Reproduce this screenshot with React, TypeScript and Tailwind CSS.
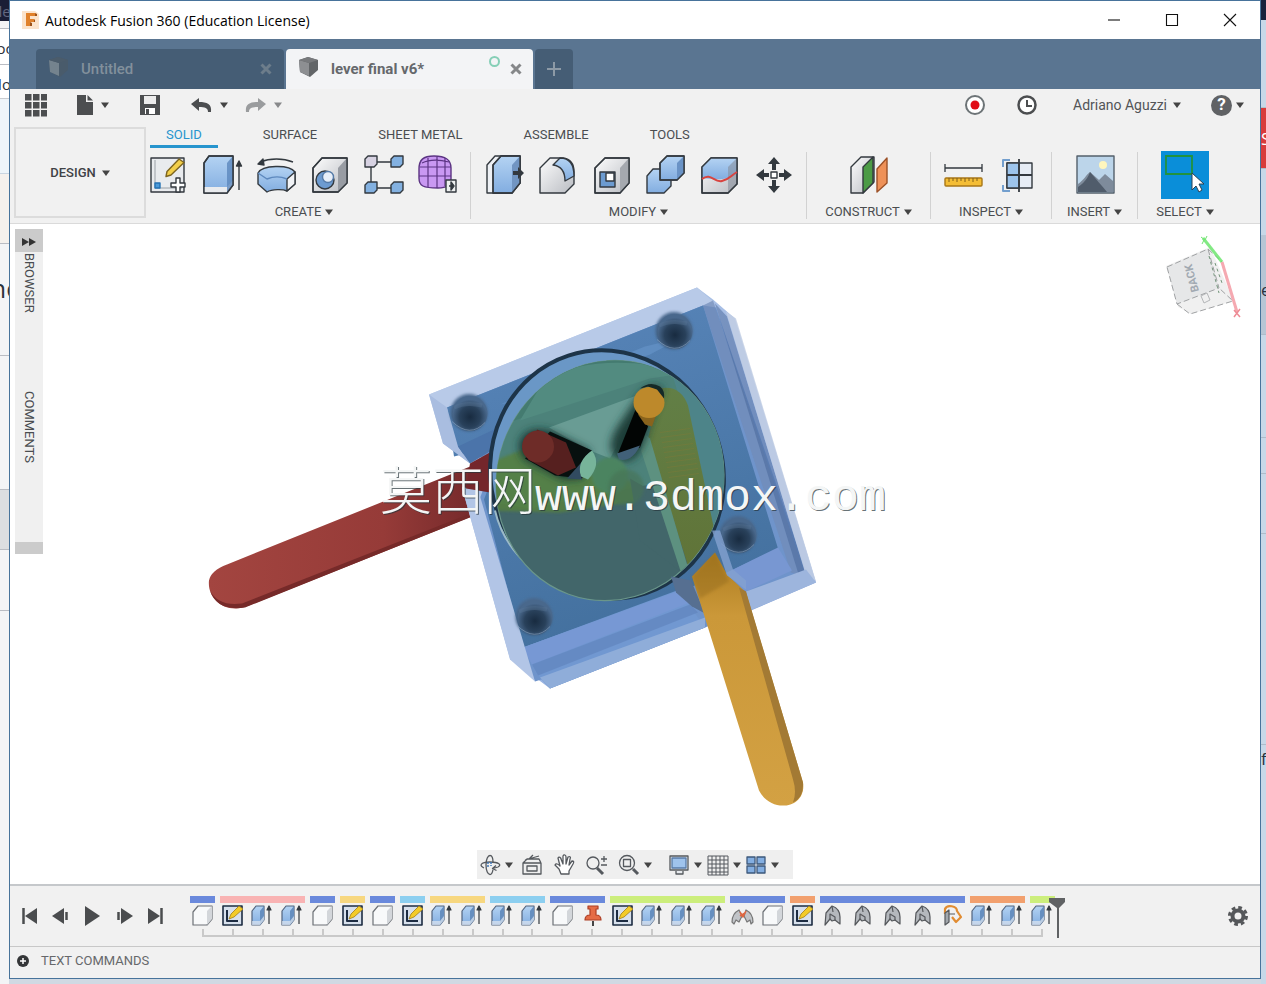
import React from 'react';

const EDGE = '#33393f';

function Caret({ className = 'text-[#444]' }: { className?: string }) {
  return (
    <svg viewBox="0 0 8 6" className={`h-[6px] w-[8px] shrink-0 ${className}`} aria-hidden="true">
      <path d="M0 0.5h8L4 6z" fill="currentColor" />
    </svg>
  );
}

function Defs() {
  return (
    <svg className="absolute h-0 w-0" aria-hidden="true">
      <defs>
        <linearGradient id="blue" x1="0" y1="0" x2="0" y2="1">
          <stop offset="0" stopColor="#b4d3f3" />
          <stop offset="1" stopColor="#82ade0" />
        </linearGradient>
        <linearGradient id="grey" x1="0" y1="0" x2="1" y2="1">
          <stop offset="0" stopColor="#fdfdfd" />
          <stop offset="1" stopColor="#b9bcc2" />
        </linearGradient>
      </defs>
    </svg>
  );
}

function Icon({ children, label }: { children: React.ReactNode; label: string }) {
  return (
    <button type="button" aria-label={label} className="h-10 w-10 shrink-0">
      <svg viewBox="0 0 40 40" className="h-10 w-10 overflow-visible" fill="none" stroke={EDGE} strokeWidth="1.4" strokeLinejoin="round">
        {children}
      </svg>
    </button>
  );
}

const createIcons = (
  <>
    <Icon label="Create Sketch">
      <rect x="2" y="3" width="33" height="34" fill="#e9ebee" />
      <path d="M6 5v28h27" stroke="#9aa0a6" strokeWidth="1" />
      <rect x="6" y="28" width="5" height="5" fill="#4d9ad8" stroke="#2472b4" />
      <path d="M18 16.500 30 4l5 3.500L22 20l-5 1.500z" fill="#f3cf4a" stroke="#7c6420" />
      <path d="M27 23h4v5h5v4h-5v5h-4v-5h-5v-4h5z" fill="#fff" />
    </Icon>
    <Icon label="Extrude">
      <path d="M1 8 6 1h24v29l-6 8H1z" fill="url(#blue)" />
      <path d="M1 32h23l6-7v5l-6 8H1z" fill="#e9ebee" stroke="none" />
      <path d="M24 8l6-7v29l-6 8z" fill="#5b87bd" fillOpacity=".8" stroke="none" />
      <path d="M1 8 6 1h24v29l-6 8H1z" />
      <path d="M36 35V8M33.500 11l2.500-5 2.500 5z" fill={EDGE} />
    </Icon>
    <Icon label="Revolve">
      <path d="M3 7C13 3 26 3 36 7" />
      <path d="M1 9l5-5 1 6z" fill={EDGE} />
      <path d="M1 18C5 10 32 9 38 17v12l-8 7C26 34 15 34 10 37L1 29z" fill="url(#blue)" />
      <path d="M30 24l8-7v12l-8 7z" fill="#f1f3f6" />
      <path d="M1 18l9 6c7-3 13-3 20 0" stroke="#5d88bd" />
    </Icon>
    <Icon label="Hole">
      <path d="M2 13 11 3h25v25L27 37H2z" fill="url(#grey)" />
      <path d="M27 13l9-10v25L27 37z" fill="#989ca3" stroke="none" />
      <path d="M2 13 11 3h25v25L27 37H2z" />
      <circle cx="14" cy="25" r="9" fill="#6d9bd0" />
      <circle cx="17" cy="22" r="5.500" fill="#e6eef8" stroke="#557ba8" />
    </Icon>
    <Icon label="Pattern">
      <path d="M11 7h16M6 12v15M11 33h16" />
      <path d="M0 4l3-3h9v8l-3 3H0z" fill="#d7d2e2" />
      <path d="M26 4l3-3h9v8l-3 3h-9zM0 30l3-3h9v8l-3 3H0zM26 30l3-3h9v8l-3 3h-9z" fill="#83b1e1" />
    </Icon>
    <Icon label="Create Form">
      <path d="M0 14C0 5 4 1 15 1s17 3 17 12v11c0 6-5 9-13 9C4 33 0 31 0 23z" fill="#c998f2" stroke="#5c3483" />
      <path d="M9 3v29M18 2v31M26 3v28M1 12h31M0 21h32M3 8c8-4 19-3 27-1" stroke="#5c3483" strokeWidth="1.200" />
      <rect x="27" y="25" width="10" height="12" fill="#eef0f0" />
      <path d="M30 31h3M32 27l3 4-3 4z" fill={EDGE} />
    </Icon>
  </>
);

const modifyIcons = (
  <>
    <Icon label="Press Pull">
      <path d="M3 10l8-9h25v27L28 38H3z" fill="#eef1f5" />
      <path d="M9 10l8-9h19v27L28 38H9z" fill="url(#blue)" />
      <path d="M28 10l8-9v27l-8 10z" fill="#7195c2" stroke="none" />
      <path d="M9 10l8-9h19v27L28 38H9z" />
      <path d="M29 16h5v-4l6 6-6 6v-4h-5z" fill={EDGE} stroke="none" />
    </Icon>
    <Icon label="Fillet">
      <path d="M2 13 12 3h13c8 1 11 7 11 14v12l-9 9H2z" fill="url(#grey)" />
      <path d="M15 10l7-7c9 0 14 5 14 18l-9 5c0-10-4-15-12-16z" fill="url(#blue)" />
    </Icon>
    <Icon label="Shell">
      <path d="M3 13 13 3h24v25L28 38H3z" fill="url(#grey)" />
      <path d="M28 13l9-10v25L28 38z" fill="#a5a9af" stroke="none" />
      <path d="M3 13 13 3h24v25L28 38H3z" />
      <rect x="8" y="17" width="15" height="15" fill="#6c9bd0" />
      <rect x="14" y="18" width="8" height="8" fill="#fff" />
    </Icon>
    <Icon label="Combine">
      <path d="M1 21l6-7h18v17l-7 7H1z" fill="url(#blue)" />
      <path d="M14 8l7-7h17v17l-7 7H14z" fill="url(#blue)" />
      <path d="M31 8l7-7v17l-7 7z" fill="#6a93c6" stroke="none" />
      <path d="M14 8l7-7h17v17l-7 7H14z" />
    </Icon>
    <Icon label="Split Body">
      <path d="M2 12l9-9h26v26l-9 9H2z" fill="url(#grey)" />
      <path d="M2 12l9-9h26v16c-9 6-20 6-35 4z" fill="url(#blue)" stroke="none" />
      <path d="M28 12l9-9v26l-9 9z" fill="#838b98" fillOpacity=".55" stroke="none" />
      <path d="M2 12l9-9h26v26l-9 9H2z" />
      <path d="M2 24c9-7 12 4 20 2s8-5 15-9" stroke="#d9433f" strokeWidth="2" />
    </Icon>
    <Icon label="Move">
      <g fill={EDGE} stroke="none">
        <path d="M20 2l6 7h-4v6h-4V9h-4zM20 38l6-7h-4v-6h-4v6h-4zM2 20l8-6v4h5v4h-5v4zM38 20l-8-6v4h-5v4h5v4z" />
      </g>
      <rect x="17" y="17" width="6" height="6" fill="#fff" />
    </Icon>
  </>
);

const constructIcon = (
  <Icon label="Offset Plane">
    <path d="M2 12 12 2h13v25L14 38H2z" fill="url(#grey)" />
    <path d="M14 12 24 2v26L14 38z" fill="#4b9b45" />
    <path d="M28 14 38 3v25L28 37z" fill="#ee9158" stroke="#9c5127" />
  </Icon>
);

const inspectIcons = (
  <>
    <Icon label="Measure">
      <path d="M1 13h37M1 9v8M38 9v8" strokeWidth="1.300" />
      <rect x="1" y="23" width="37" height="8" rx="1" fill="#f4bd35" stroke="#a87718" />
      <path d="M5 23v4M9 23v3M13 23v4M17 23v3M21 23v4M25 23v3M29 23v4M33 23v3" stroke="#805e19" strokeWidth="1" />
    </Icon>
    <Icon label="Section Analysis">
      <rect x="9" y="8" width="25" height="25" fill="#e6ecf5" />
      <path d="M9 8h12v25H9z" fill="#9dc4ec" />
      <path d="M21 4v33M9 20h25" strokeWidth="1.800" />
      <path d="M5 12V5h7M5 30v6h7" stroke="#739fce" strokeWidth="2" />
    </Icon>
  </>
);

const insertIcon = (
  <Icon label="Insert Image">
    <rect x="2" y="1" width="37" height="37" fill="#bcd5ea" stroke="#54606b" />
    <circle cx="28" cy="10" r="4" fill="#fff6bd" stroke="none" />
    <path d="M3 29c6-4 8-9 12-12l9 8 6-6 8 7v11H3z" fill="#7e8b9b" stroke="none" />
    <path d="M3 32c8-5 11-12 12-15 6 7 12 14 17 20H3z" fill="#505c6b" stroke="none" />
  </Icon>
);

function Group({ label, icons, className }: { label: string; icons: React.ReactNode; className: string }) {
  return (
    <section className={`flex flex-col items-center ${className}`}>
      <div className="flex h-[54px] items-center gap-[14px]">{icons}</div>
      <button type="button" className="flex h-5 items-center gap-1">
        {label}
        <Caret />
      </button>
    </section>
  );
}

function Divider() {
  return <div className="my-1 w-px shrink-0 bg-[#d2d2d2]" />;
}

function TimelineIcon({ kind }: { kind: string }) {
  return (
    <svg viewBox="0 0 25 25" className="h-[25px] w-[25px]" fill="none" strokeWidth="1.200" strokeLinejoin="round" stroke={EDGE} aria-hidden="true">
      {kind === 'box' && (
        <>
          <path d="M3 9l5-6h14v13l-5 6H3z" fill="#f8f9fa" stroke="#6c7076" />
          <path d="M17 8l5-5v13l-5 6z" fill="#d3d6da" stroke="none" />
        </>
      )}
      {kind === 'sketch' && (
        <>
          <rect x="3" y="3" width="19" height="19" fill="#d7e0ec" stroke="#1d2c42" strokeWidth="1.600" />
          <path d="M7 7v11h11" stroke="#1d2c42" strokeWidth="2" />
          <path d="M9 16l2-5 8-8 4 3-9 8z" fill="#f3cb29" stroke="#a27e16" strokeWidth="0.800" />
        </>
      )}
      {kind === 'extrude' && (
        <>
          <path d="M2 8l4-5h8v14l-4 5H2z" fill="url(#blue)" stroke="#51637d" />
          <path d="M10 8l4-5v14l-4 5z" fill="#668fc0" stroke="none" />
          <path d="M2 18h8l4-5v4l-4 5H2z" fill="#dfe7f1" fillOpacity=".7" stroke="none" />
          <path d="M19 21V6M17 7l2-4 2 4z" fill={EDGE} />
        </>
      )}
      {kind === 'pin' && (
        <>
          <path d="M13 18v5" stroke="#444" strokeWidth="2" />
          <path d="M8 3h10v3h-2v6c3 0 5 2 5 5H5c0-3 2-5 5-5V6H8z" fill="#e56c46" stroke="#ac3e25" />
        </>
      )}
      {kind === 'joint' && (
        <>
          <path d="M2 19c0-6 3-10 7-12l3 6-3 6-3-2-2 4z" fill="#c1c4c8" stroke="#777" />
          <path d="M23 19c0-6-3-10-7-12l-2 6 3 6 3-2 1 4z" fill="#c1c4c8" stroke="#777" />
          <path d="M10 9l3 5 3-6M10 13l5-3" stroke="#df6640" strokeWidth="1.500" />
        </>
      )}
      {kind === 'bend' && (
        <>
          <path d="M6 10l6-7c6 2 8 6 8 11v7l-5-4-3 1-2-2-5 6z" fill="#b4b8bd" stroke="#55585c" />
          <path d="M10 16v-5l5 3v4M12 3l1 6" stroke="#55585c" />
        </>
      )}
      {kind === 'revolve' && (
        <>
          <path d="M5 11V6c2-5 12-3 12 2l4 6-5 5-4-5" stroke="#e18c32" strokeWidth="2.200" />
          <path d="M5 22V10l4-3v12zM9 11h6" fill="#a2a7ac" stroke="#55585c" />
        </>
      )}
    </svg>
  );
}

const timeline = [
  { bar: 'bg-[#6a89dc]', items: ['box'] },
  { bar: 'bg-[#f9b3b3]', items: ['sketch', 'extrude', 'extrude'] },
  { bar: 'bg-[#6a89dc]', items: ['box'] },
  { bar: 'bg-[#f7d77f]', items: ['sketch'] },
  { bar: 'bg-[#6a89dc]', items: ['box'] },
  { bar: 'bg-[#8ccff0]', items: ['sketch'] },
  { bar: 'bg-[#f7d77f]', items: ['extrude', 'extrude'] },
  { bar: 'bg-[#8ccff0]', items: ['extrude', 'extrude'] },
  { bar: 'bg-[#6a89dc]', items: ['box', 'pin'] },
  { bar: 'bg-[#ccee7c]', items: ['sketch', 'extrude', 'extrude', 'extrude'] },
  { bar: 'bg-[#6a89dc]', items: ['joint', 'box'] },
  { bar: 'bg-[#f2a06e]', items: ['sketch'] },
  { bar: 'bg-[#6a89dc]', items: ['bend', 'bend', 'bend', 'bend', 'revolve'] },
  { bar: 'bg-[#f2a06e]', items: ['extrude', 'extrude'] },
  { bar: 'bg-[#ccee7c]', items: ['extrude'] },
];
const tickCount = timeline.reduce((n, g) => n + g.items.length, 0);

const playback = [
  { label: 'Go to start', fill: 'M5 11l12-8v16z', bar: 'M3.500 3v16' },
  { label: 'Step back', fill: 'M1 11l12-8v16z', bar: 'M15.500 7v8' },
  { label: 'Play', fill: 'M3 1l15 10L3 21z', bar: '' },
  { label: 'Step forward', fill: 'M8 3l12 8-12 8z', bar: 'M5.500 7v8' },
  { label: 'Go to end', fill: 'M4 3l12 8-12 8z', bar: 'M17.500 3v16' },
];

function Model() {
  const spheres = [
    [674, 330],
    [469, 412],
    [738, 534],
    [534, 616],
  ];
  return (
    <svg viewBox="10 224 1250 659" className="absolute inset-0 h-full w-full" role="img" aria-label="Lever assembly">
      <defs>
        <linearGradient id="red" x1="0" x2="1">
          <stop offset="0" stopColor="#a34540" />
          <stop offset=".6" stopColor="#963b38" />
          <stop offset="1" stopColor="#6d2528" />
        </linearGradient>
        <linearGradient id="glass" x1="0" y1="0" x2="1" y2="1">
          <stop offset="0" stopColor="#c3d3ed" />
          <stop offset="1" stopColor="#7d9fd9" />
        </linearGradient>
        <linearGradient id="face" x1="0" y1="0" x2=".3" y2="1">
          <stop offset="0" stopColor="#5986bb" />
          <stop offset="1" stopColor="#44719f" />
        </linearGradient>
        <linearGradient id="gold" x1="0" y1="0" x2="0" y2="1">
          <stop offset="0" stopColor="#ac7c1f" />
          <stop offset=".25" stopColor="#cb9839" />
          <stop offset="1" stopColor="#d3a143" />
        </linearGradient>
        <linearGradient id="olive" x1="0" y1="0" x2="0" y2="1">
          <stop offset="0" stopColor="#627f46" />
          <stop offset="1" stopColor="#607337" />
        </linearGradient>
        <radialGradient id="ball" cx=".5" cy=".6">
          <stop offset="0" stopColor="#182b40" />
          <stop offset=".6" stopColor="#29415b" />
          <stop offset="1" stopColor="#49688c" />
        </radialGradient>
        <filter id="soft" x="-30%" y="-30%" width="160%" height="160%">
          <feGaussianBlur stdDeviation="4" />
        </filter>
        <filter id="faint" x="-10%" y="-10%" width="120%" height="120%">
          <feGaussianBlur stdDeviation="1.5" />
        </filter>
        <clipPath id="disk">
          <ellipse cx="610" cy="480" rx="113" ry="121" transform="rotate(20 610 480)" />
        </clipPath>
      </defs>

      <path d="M227 564 500 454 500 505 249 605C225 615 207 598 209 580Q211 570 227 564Z" fill="url(#red)" />
      <path d="M210 590Q218 606 242 603L488 506 484 511 245 607Q217 611 210 590Z" fill="#762a29" />

      <path d="M429 394 697 287 713 299 735 318 816 582 751 610 705 627 550 688 510 658 462 487 478 488 493 458 470 463 443 443Z" fill="url(#glass)" />
      <path d="M429 394 697 287 713 301 447 407Z" fill="#b8cae8" />
      <path d="M447 407 703 305 716 307 807 574 740 604 705 627 535 681 519 650 479 500 495 458 470 456Z" fill="#6f94cb" />
      <path d="M447 407 703 305 778 548 725 573 677 592 523 647 484 499 505 443 454 456Z" fill="url(#face)" />
      <path d="M703 305 713 300 806 577 791 572Z" fill="#718bb5" opacity=".65" />
      <path d="M715 303 727 316 807 577 798 572Z" fill="#405f93" opacity=".45" />
      <path d="M726 311 736 318 816 581 806 575Z" fill="#c3cfe4" opacity=".85" />
      <path d="M523 647 677 590 691 607 705 627 550 688 537 674Z" fill="#7198d1" />
      <path d="M523 647 677 591 690 602 532 664Z" fill="#7798d4" />
      <path d="M532 664 690 604 698 612 538 675Z" fill="#6185bd" opacity=".7" />
      <path d="M540 677 705 617 705 627 550 688Z" fill="#8fadd9" />
      <path d="M727 572 778 547 792 570 746 591Z" fill="#7897d2" />
      <path d="M746 591 806 569 816 582 750 610Z" fill="#9db5dd" />
      <path d="M429 394 447 407 458 446 470 463 443 443Z" fill="#a9bde0" />
      <path d="M458 446 494 429 508 440 470 463Z" fill="#4b74aa" />
      <path d="M500 404 645 346 682 337 650 354 520 400Z" fill="#6b99cf" opacity=".5" />
      <path d="M462 487 478 489 535 681 510 659Z" fill="#b2c5e6" />
      <path d="M470 463 497 448 490 492 466 488Z" fill="#74262b" />

      {spheres.map(([cx, cy]) => (
        <g key={cx}>
          <circle cx={cx} cy={cy} r="18.500" fill="url(#ball)" filter="url(#faint)" />
          <circle cx={cx + 1} cy={cy + 1} r="17.500" fill="url(#ball)" />
          <path d={`M${cx - 17} ${cy + 9}q18 17 33 1`} fill="none" stroke="#8ba4bf" strokeWidth="1" opacity=".6" />
          <path d={`M${cx - 15} ${cy - 5}q12-6 28-2`} fill="none" stroke="#5d7997" strokeWidth="4" opacity=".35" />
        </g>
      ))}

      <ellipse cx="607" cy="474" rx="116" ry="125" transform="rotate(-18 607 474)" fill="#6a97c6" stroke="#1d3448" strokeWidth="4" />
      <path d="M495 510C504 549 540 591 604 593" fill="none" stroke="#9cbac8" strokeWidth="2" />
      <ellipse cx="610" cy="480" rx="113" ry="121" transform="rotate(20 610 480)" fill="#42666a" stroke="#6a968a" strokeWidth="1.200" />
      <g clipPath="url(#disk)">
        <path d="M480 350H740V500L670 480 530 508 480 500Z" fill="#4c827a" />
        <path d="M500 425 660 370 740 355 718 306 550 330Z" fill="#447b70" />
        <path d="M545 378Q600 350 690 372L650 378 520 420Z" fill="#528b80" />
        <path d="M549 427 645 392 610 458 590 450Z" fill="#699c94" />
        <path d="M483 465 525 448 590 474 630 480 640 500 560 512 480 510Z" fill="#57803f" opacity=".85" filter="url(#faint)" />
        <path d="M670 366 726 385 735 550 712 546 680 400Z" fill="#4d8489" />
        <path d="M630 478 668 500 690 578 640 540Z" fill="#42666a" />
        <path d="M648 438 660 388Q680 384 688 405L718 547 692 578Z" fill="url(#olive)" />
        <path d="M645 434 650 438 690 574 683 578 641 450Z" fill="#5d9180" />
      </g>
      <g stroke="#7e7a38" strokeWidth="0.800" opacity=".6">
        {[432, 437, 442, 447, 452, 457, 462, 467, 472, 477].map((y) => (
          <path key={y} d={`M${660 + (y - 432) / 5} ${y}l30-4`} />
        ))}
      </g>

      <path d="M519 447C520 430 535 425 554 432L590 450Q585 467 583 478L563 479 524 459Z" fill="#193532" filter="url(#soft)" />
      <path d="M550 431 592 450 582 478 555 475 525 458Z" fill="#07100f" />
      <path d="M537 429 566 442 576 467 558 475 528 459Z" fill="#56201f" />
      <circle cx="538" cy="446" r="16" fill="#6e2c28" />
      <path d="M592 450Q576 461 582 479L567 478 576 468Z" fill="#314b60" />

      <path d="M635 400Q648 378 663 388L649 427Q639 466 620 460 603 450 617 427Z" fill="#1f3d38" filter="url(#soft)" />
      <path d="M636 408 648 426 640 447 618 453Z" fill="#020504" />
      <path d="M617 453 640 445Q632 462 619 459Z" fill="#416078" />
      <path d="M638 414 661 401 652 426 645 424Z" fill="#88631d" />
      <circle cx="649" cy="402" r="15.500" fill="#bd892b" />
      <path d="M640 388Q650 380 660 386 665 390 664 398L657 389 648 386Z" fill="#152927" />

      <circle cx="610" cy="475" r="18" fill="#4c8460" filter="url(#faint)" />
      <circle cx="626" cy="487" r="18" fill="#477355" opacity=".6" filter="url(#faint)" />
      <path d="M592 450Q602 464 588 479L581 476Q576 461 592 450Z" fill="#77b49a" />

      <path d="M671 576 691 580 705 613 692 606 676 592Z" fill="#566f91" />
      <path d="M692 576 715 552 727 574 746 592 803 782C807 808 771 814 759 790Z" fill="url(#gold)" />
      <path d="M739 587 746 591 803 782Q804 797 793 802 797 792 793 779Z" fill="#a37a34" />
      <path d="M692 576 715 552 729 581 700 598Z" fill="#8f671c" opacity=".4" filter="url(#faint)" />
      <path d="M712 530 727 575 746 589 746 580 733 569 720 530Z" fill="#83a1cf" opacity=".8" />

      <g fontFamily="'Liberation Mono', 'Noto Sans CJK SC', monospace" fontWeight="300">
        <g fill="#26343a" fillOpacity=".7">
          <text x="381" y="510" fontSize="52" fontFamily="'Noto Sans CJK SC', sans-serif">莫西网</text>
          <text x="536" y="510" fontSize="45">www.3dmox.com</text>
        </g>
        <g fill="#f4f6f6" aria-hidden="true">
          <text x="380" y="509" fontSize="52" fontFamily="'Noto Sans CJK SC', sans-serif">莫西网</text>
          <text x="535" y="509" fontSize="45">www.3dmox.com</text>
        </g>
      </g>
    </svg>
  );
}

function ViewCube() {
  return (
    <svg viewBox="1160 230 88 92" className="absolute top-[6px] right-3 h-[92px] w-[88px]" role="img" aria-label="View cube">
      <path d="M1166 266 1210 247 1226 283 1233 301 1191 314 1178 307Z" fill="#f0f0f0" />
      <path d="M1167 267 1208 249 1219 288 1177 304Z" fill="#e6e7e8" />
      <path d="M1167 267 1208 249 1219 288 1177 304ZM1177 304 1190 314 1233 301 1219 288M1208 249 1222 262 1233 301" fill="none" stroke="#a0a2a4" strokeDasharray="6 3" />
      <path d="M1203 238 1222 262" stroke="#65e466" strokeWidth="3" opacity=".8" />
      <path d="M1201 237l4 3 2-4M1204 240l-2 4" stroke="#70e571" fill="none" />
      <path d="M1222 262 1237 312" stroke="#f5a9b1" strokeWidth="3" />
      <path d="M1234 310l6 7M1240 309l-6 8" stroke="#ee8b95" strokeWidth="1.500" />
      <path d="M1209 256l10 37M1215 263l7 20" stroke="#73957a" strokeDasharray="3 3" />
      <path d="M1201 296l6-3 3 7-6 3z" fill="none" stroke="#b4b6b8" />
      <text transform="translate(1199 291) rotate(-105)" fontFamily="Roboto, sans-serif" fontSize="11" fontWeight="700" fill="#a1a9b1">BACK</text>
    </svg>
  );
}

function NavIcon({ label, caret, children, className = '' }: { label: string; caret?: boolean; children: React.ReactNode; className?: string }) {
  return (
    <button type="button" aria-label={label} className={`flex items-center gap-1 ${className}`}>
      <svg viewBox="0 0 22 22" className="h-[22px] w-[22px]" fill="none" stroke="#55595e" strokeWidth="1.300" strokeLinejoin="round">
        {children}
      </svg>
      {caret && <Caret />}
    </button>
  );
}

function NavBar() {
  return (
    <div className="absolute bottom-[5px] left-1/2 flex h-[29px] w-[316px] -translate-x-1/2 items-center bg-[#efefef] pl-[2px]">
      <NavIcon label="Orbit" caret>
        <path d="M14 8c0-4-1-6.500-3-6.500S7 5 7 11s2 9.500 4 9.500c1.500 0 2.500-2 3-5" />
        <path d="M5 14c-5-2-4-6 6-6 9 0 12 3 8 5l-5 1.500M17 11.500 13.500 14.500l4 2" />
        <path d="M9 8v6M12 8v4" stroke="#4279b8" strokeWidth="1.500" strokeDasharray="2 1" />
      </NavIcon>
      <NavIcon label="Look At" className="ml-2">
        <path d="M2 9h18v11H2zM6 12h10v5H6zM2 9l4-4h12l2 4M4 6l14-4M8 5l4-4" />
      </NavIcon>
      <NavIcon label="Pan" className="ml-[11px]">
        <path d="M7 20 5 15 1 11c1-2 3-1 5 1L4 4c1-2 3 0 3 1l2 5V2c1-2 3-1 3 1v7l2-7c2-1 3 0 2 2l-1 6 3-4c2 0 2 1 1 3l-4 7v3z" fill="#fff" />
      </NavIcon>
      <NavIcon label="Zoom" className="ml-[10px]">
        <circle cx="7" cy="9" r="6" />
        <path d="M11 14l6 6" strokeWidth="3" />
        <path d="M15 5h6M18 2v6M15 11h6" />
      </NavIcon>
      <NavIcon label="Fit" caret className="ml-[10px]">
        <circle cx="9" cy="9" r="7.500" />
        <path d="M5.500 5.500h7v7h-7z" />
        <path d="M15 15l5 5" strokeWidth="3" />
      </NavIcon>
      <NavIcon label="Display Settings" caret className="ml-4">
        <path d="M2 2h18v14H2zM8 17v3h7v-3" fill="#e6e9ed" />
        <path d="M4 4h14v10H4z" fill="#9fc3ec" stroke="#577ba8" />
      </NavIcon>
      <NavIcon label="Grid and Snaps" caret className="ml-[5px]">
        <path d="M1 2h20v19H1zM5 2v19M9 2v19M13 2v19M17 2v19M1 6h20M1 10h20M1 14h20M1 18h20" strokeWidth="1" />
      </NavIcon>
      <NavIcon label="Viewports" caret className="ml-[4px]">
        <path d="M2 3h8v7H2zM12 3h8v7h-8zM2 12h8v7H2zM12 12h8v7h-8z" fill="#83aee1" stroke="#3d587b" />
      </NavIcon>
    </div>
  );
}

function CubeGlyph({ dim }: { dim?: boolean }) {
  return (
    <svg viewBox="0 0 22 24" className="mb-1 h-6 w-[22px]" aria-hidden="true">
      <path d="M1 5 10 2l10 3v10l-8 7L2 17z" fill={dim ? '#495b6b' : '#626568'} />
      <path d="M1 5l10 3v13l-9-4z" fill={dim ? '#74838e' : '#8d8f92'} />
      <path d="M1 5l9-3 10 3-9 3z" fill={dim ? '#4b5c6b' : '#77797c'} />
    </svg>
  );
}

function Cross({ className }: { className: string }) {
  return (
    <svg viewBox="0 0 12 12" className={`h-3 w-3 ${className}`} aria-hidden="true">
      <path d="M1.500 1.500l9 9M10.500 1.500l-9 9" stroke="currentColor" strokeWidth="3" />
    </svg>
  );
}

export default function App() {
  return (
    <div className="flex min-h-screen bg-[#d0d9e3] font-[Roboto,'Liberation_Sans',sans-serif] text-[13px] text-[#4a4d50]">
      <Defs />
      <aside className="w-[9px] shrink-0 overflow-hidden bg-[#f3f4f6] font-['Open_Sans',sans-serif] text-[15px] whitespace-nowrap text-[#2b3139]">
        <div className="flex h-[21px] justify-center bg-[#1a1e36] text-[#626780]">le</div>
        <div className="h-[8px] border-b border-[#b9bcc3]" />
        <div className="flex h-[36px] justify-center border-b border-[#b9bcc3] bg-white pt-2">oc</div>
        <div className="flex h-[34px] justify-center border-b border-[#c9ccd1] bg-white pt-2">lo</div>
        <div className="h-[75px] border-b border-[#c9d5e1] bg-[#eef5fa]" />
        <div className="h-[70px] border-b border-[#b9bcc3] bg-[#f5f1ed]" />
        <div className="flex h-[112px] justify-center border-b border-[#b9bcc3] pt-[26px] text-[25px]">nc</div>
        <div className="h-[134px] border-b border-[#b9bcc3]" />
        <div className="h-[60px] border-b border-[#b9bcc3] bg-[#dcdee1]" />
        <div className="h-[61px] border-b border-[#b9bcc3]" />
      </aside>

      <main className="mb-[5px] flex min-w-0 flex-1 flex-col border border-[#47739b] bg-[#f1f1f1]">
        <header className="flex h-[38px] shrink-0 items-center bg-white pr-px pl-3 font-['Open_Sans',sans-serif] text-[14px] text-black">
          <svg viewBox="0 0 17 20" className="h-5 w-[17px]" aria-hidden="true">
            <path d="M0 1h13l4 3v15H0z" fill="#fbe3cb" />
            <path d="M4 3h9v3H8v3h4v3H8v4H4z" fill="#e0812b" />
            <path d="M13 3l2 1v2h-2zM12 9l1 1v2h-1zM8 12l2 1v3H8z" fill="#9c5117" />
          </svg>
          <h1 className="ml-[6px] flex-1">Autodesk Fusion 360 (Education License)</h1>
          {[
            { label: 'Minimize', d: 'M1 7h12' },
            { label: 'Maximize', d: 'M1.500 1.500h11v11h-11z' },
            { label: 'Close', d: 'M1 1l12 12M13 1L1 13' },
          ].map((b) => (
            <button key={b.label} type="button" aria-label={b.label} className="flex h-full w-[58px] items-center justify-center">
              <svg viewBox="0 0 14 14" className="h-[14px] w-[14px]" fill="none" stroke="#111" strokeWidth="1.100">
                <path d={b.d} />
              </svg>
            </button>
          ))}
        </header>

        <nav className="flex h-[50px] shrink-0 items-end bg-[#5a7591] pl-[26px] text-[15px] font-medium">
          <div className="flex h-10 w-[248px] items-center rounded-t bg-[#455d75] px-3 text-[#82909c]">
            <CubeGlyph dim />
            <a href="#untitled" className="ml-[11px] flex-1">Untitled</a>
            <button type="button" aria-label="Close Untitled"><Cross className="text-[#6d7d8b]" /></button>
          </div>
          <div className="ml-[2px] flex h-10 w-[247px] items-center rounded-t bg-[#f3f4f6] pr-[11px] pl-3 text-[#65686c]">
            <CubeGlyph />
            <a href="#lever" className="ml-[11px] flex-1 font-bold">lever final v6*</a>
            <span className="mr-[10px] mb-4 h-[11px] w-[11px] rounded-full border-2 border-[#86cfb7]" />
            <button type="button" aria-label="Close lever final v6"><Cross className="text-[#858789]" /></button>
          </div>
          <button type="button" aria-label="New tab" className="ml-[2px] flex h-10 w-[38px] items-center justify-center rounded-t bg-[#455d75]">
            <svg viewBox="0 0 14 14" className="h-[14px] w-[14px]"><path d="M7 0v14M0 7h14" stroke="#8d9aa6" strokeWidth="2" /></svg>
          </button>
        </nav>

        <div className="flex h-8 shrink-0 items-center pr-4 pl-[14px] text-[#4c4e50]">
          <button type="button" aria-label="Data panel" className="w-[23px]">
            <svg viewBox="0 0 23 23" className="h-[23px] w-[23px]" fill="currentColor">
              {[0, 8, 16].map((y) => [0, 8, 16].map((x) => <rect key={`${x}-${y}`} x={x + 1} y={y} width="6.500" height="6.500" />))}
            </svg>
          </button>
          <button type="button" aria-label="File" className="ml-[29px] flex items-center gap-[5px]">
            <svg viewBox="0 0 20 22" className="h-[22px] w-5"><path d="M1 1h9v7h7v13H1z" fill="currentColor" /><path d="M11.500 1l5.500 5.500h-5.500z" fill="currentColor" /></svg>
            <Caret />
          </button>
          <button type="button" aria-label="Save" className="ml-[31px]">
            <svg viewBox="0 0 20 22" className="h-[22px] w-5">
              <path d="M0 1h20v20H0z" fill="currentColor" />
              <path d="M4 2h12v8H4z" fill="#ececec" />
              <path d="M5 14h10v6H5z" fill="#fff" />
              <path d="M6 15h3v5H6z" fill="currentColor" />
            </svg>
          </button>
          <button type="button" aria-label="Undo" className="ml-[31px] flex items-center gap-[7px]">
            <svg viewBox="0 0 22 18" className="h-[18px] w-[22px]"><path d="M0 8l8-6v4c8 0 13 2 12 10h-3c0-4-3-5-9-5v4z" fill="currentColor" /></svg>
            <Caret />
          </button>
          <button type="button" aria-label="Redo" className="ml-[17px] flex items-center gap-[7px] text-[#9a9c9e]">
            <svg viewBox="0 0 22 18" className="h-[18px] w-[22px]"><path d="M21 8l-8-6v4C5 6 0 8 1 16h3c0-4 3-5 9-5v4z" fill="currentColor" /></svg>
            <Caret className="text-[#88898b]" />
          </button>
          <div className="flex-1" />
          <button type="button" aria-label="Record" className="mr-[31px]">
            <svg viewBox="0 0 22 22" className="h-[22px] w-[22px]"><circle cx="11" cy="11" r="9" fill="#fff" stroke="#6d7477" strokeWidth="2" /><circle cx="11" cy="11" r="4.500" fill="#e10c16" /></svg>
          </button>
          <button type="button" aria-label="Job status" className="mr-9">
            <svg viewBox="0 0 20 22" className="h-[22px] w-5" fill="none" stroke="currentColor"><circle cx="10" cy="11" r="8.500" fill="#fff" strokeWidth="2.500" /><path d="M10 6v6h5" strokeWidth="2" /></svg>
          </button>
          <button type="button" className="mr-[30px] flex items-center gap-[6px] text-[14px] text-[#525457]">Adriano Aguzzi <Caret /></button>
          <button type="button" aria-label="Help" className="flex items-center gap-1">
            <span className="flex h-[21px] w-[21px] items-center justify-center rounded-full bg-[#606265] text-[17px] font-bold text-white">?</span>
            <Caret />
          </button>
        </div>

        <div className="flex h-[103px] shrink-0 border-b border-[#dadada] pl-1">
          <button type="button" className="mt-[6px] mb-[5px] flex w-[132px] shrink-0 items-center justify-center gap-[6px] border-2 border-[#dcdcdc] font-medium text-[#404246]">
            DESIGN <Caret />
          </button>
          <div className="ml-1 flex min-w-0 flex-1 flex-col">
            <div className="flex h-[27px] gap-[29px]">
              {['SOLID', 'SURFACE', 'SHEET METAL', 'ASSEMBLE', 'TOOLS'].map((t, i) => (
                <button
                  key={t}
                  type="button"
                  className={i === 0 ? 'border-b-[3px] border-[#2795ce] px-4 pt-1 text-[#2795ce]' : 'border-b-[3px] border-transparent px-4 pt-1'}
                >
                  {t}
                </button>
              ))}
            </div>
            <div className="flex flex-1">
              <Group label="CREATE" icons={createIcons} className="w-[320px] pr-3" />
              <Divider />
              <Group label="MODIFY" icons={modifyIcons} className="w-[335px]" />
              <Divider />
              <Group label="CONSTRUCT" icons={constructIcon} className="w-[123px]" />
              <Divider />
              <Group label="INSPECT" icons={inspectIcons} className="w-[120px]" />
              <Divider />
              <Group label="INSERT" icons={insertIcon} className="w-[85px]" />
              <Divider />
              <Group
                label="SELECT"
                className="w-[94px]"
                icons={
                  <button type="button" aria-label="Select" className="h-12 w-12 bg-[#0a8ed9]">
                    <svg viewBox="0 0 48 48" className="h-12 w-12">
                      <path d="M5 5h26v18H5z" fill="none" stroke="#22923d" strokeWidth="1.800" />
                      <path d="M31 22v17l4-4 3 6 3-2-3-6h5z" fill="#fff" stroke="#2b4052" />
                    </svg>
                  </button>
                }
              />
            </div>
          </div>
        </div>

        <section className="relative min-h-[600px] flex-1 overflow-hidden bg-white">
          <Model />
          <div className="absolute top-[5px] left-[5px] flex h-[325px] w-7 flex-col items-center bg-[#f0f0f0]">
            <button type="button" aria-label="Expand panels" className="flex h-[23px] w-full items-center justify-center bg-[#cbcbcb] pt-[3px]">
              <svg viewBox="0 0 14 10" className="h-[10px] w-[14px]"><path d="M0 1l7 4-7 4zM7 1l7 4-7 4z" fill="#333" /></svg>
            </button>
            <button type="button" className="mt-px h-[60px] [writing-mode:vertical-rl]">BROWSER</button>
            <button type="button" className="mt-[78px] h-[72px] [writing-mode:vertical-rl]">COMMENTS</button>
            <div className="mt-auto h-3 w-full bg-[#cbcbcb]" />
          </div>
          <ViewCube />
          <NavBar />
        </section>

        <footer className="shrink-0 border-t-2 border-[#c5c8cb]">
          <div className="flex h-[61px] items-center border-b border-[#c8c8c8] pr-[11px] pl-[10px]">
            <div className="flex gap-[9px]">
              {playback.map((p) => (
                <button key={p.label} type="button" aria-label={p.label}>
                  <svg viewBox="0 0 22 22" className="h-[22px] w-[22px] text-[#4a4c4e]">
                    <path d={p.fill} fill="currentColor" />
                    {p.bar && <path d={p.bar} stroke="currentColor" strokeWidth="2.500" />}
                  </svg>
                </button>
              ))}
            </div>
            <div className="relative ml-6">
              <div className="flex gap-[5px]">
                {timeline.map((g, i) => (
                  <div key={i}>
                    <div className={`h-[7px] ${g.bar}`} />
                    <div className="flex gap-[5px]">
                      {g.items.map((k, j) => (
                        <TimelineIcon key={j} kind={k} />
                      ))}
                    </div>
                  </div>
                ))}
              </div>
              <div className="mx-3 flex h-[9px] items-end justify-between border-b-2 border-[#c9c9c9]">
                {Array.from({ length: tickCount }, (_, i) => (
                  <span key={i} className="h-[6px] w-[2px] bg-[#c9c9c9]" />
                ))}
              </div>
              <svg viewBox="0 0 16 40" className="absolute top-[2px] -right-[10px] h-10 w-4" aria-hidden="true">
                <path d="M0 0h16v4l-6 6v30H8V10L0 4z" fill="#606264" />
              </svg>
            </div>
            <button type="button" aria-label="Timeline settings" className="ml-auto">
              <svg viewBox="0 0 22 22" className="h-[22px] w-[22px]" fill="none" stroke="#55575a">
                <circle cx="11" cy="11" r="8.500" strokeWidth="3" strokeDasharray="3.700 2.976" />
                <circle cx="11" cy="11" r="5.500" strokeWidth="4" />
              </svg>
            </button>
          </div>
          <button type="button" className="flex h-[31px] w-full items-center gap-3 pb-[3px] pl-[7px] text-[#66686b]">
            <svg viewBox="0 0 12 12" className="h-3 w-3"><circle cx="6" cy="6" r="6" fill="#343638" /><path d="M6 3v6M3 6h6" stroke="#fff" strokeWidth="1.500" /></svg>
            TEXT COMMANDS
          </button>
        </footer>
      </main>

      <aside className="w-[5px] shrink-0 overflow-hidden bg-[#c7d8e8] font-['Open_Sans',sans-serif] text-[17px] text-[#28323d]">
        <div className="h-[20px] bg-[#18213c]" />
        <div className="h-[88px] border-b border-[#b5bfc8]" />
        <div className="h-[60px] bg-[#d93b3b] pt-[18px] text-[#fff]">S</div>
        <div className="h-[67px] border-t border-[#aebcca]" />
        <div className="h-[100px] border-b border-[#aebcca] bg-[#b7c6d5] pt-[42px]">e</div>
        <div className="h-[103px] border-b border-[#aebcca]" />
        <div className="h-[36px] border-b border-[#aebcca]" />
        <div className="h-[60px] border-b border-[#aebcca]" />
        <div className="h-[211px] border-b border-[#aebcca] pt-[210px]" />
        <div className="mt-[1px] h-[24px]">f</div>
      </aside>
    </div>
  );
}
